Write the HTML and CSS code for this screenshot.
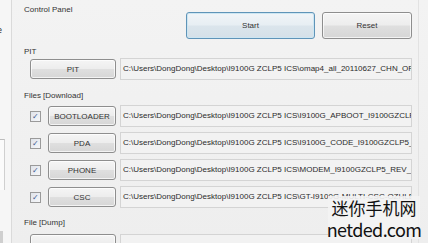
FILE: index.html
```html
<!DOCTYPE html>
<html lang="en">
<head>
  <meta charset="UTF-8" />
  <title>Odin3 - Control Panel</title>
  <link rel="stylesheet" href="styles.css">
</head>
<body>

  <div class="window">
    <!-- Left strip (previous panel, cut off) -->
    <div class="side">
      <span class="side-label">e</span>
      <div class="side-box"></div>
      <div class="side-bottom"></div>
    </div>

    <!-- Main panel -->
    <div class="panel">

      <!-- Control Panel -->
      <section class="control">
        <div class="group-title">Control Panel</div>
        <div class="control-buttons">
          <button class="btn btn-start">Start</button>
          <button class="btn btn-reset">Reset</button>
        </div>
      </section>

      <!-- PIT -->
      <div class="group-title pit-title">PIT</div>
      <div class="file-row no-check">
        <button class="btn btn-file btn-pit">PIT</button>
        <div class="path">C:\Users\DongDong\Desktop\I9100G ZCLP5 ICS\omap4_all_20110627_CHN_OFFICIAL.pit</div>
      </div>

      <!-- Files [Download] -->
      <div class="group-title files-title">Files [Download]</div>
      <div class="file-list">
        <div class="file-row">
          <span class="check">&#10003;</span>
          <button class="btn btn-file">BOOTLOADER</button>
          <div class="path">C:\Users\DongDong\Desktop\I9100G ZCLP5 ICS\I9100G_APBOOT_I9100GZCLP5_CL1069718_REV_00_user_low_ship.tar.md5</div>
        </div>
        <div class="file-row">
          <span class="check">&#10003;</span>
          <button class="btn btn-file">PDA</button>
          <div class="path">C:\Users\DongDong\Desktop\I9100G ZCLP5 ICS\I9100G_CODE_I9100GZCLP5_CL1069718_REV_00_user_low_ship.tar.md5</div>
        </div>
        <div class="file-row">
          <span class="check">&#10003;</span>
          <button class="btn btn-file">PHONE</button>
          <div class="path">C:\Users\DongDong\Desktop\I9100G ZCLP5 ICS\MODEM_I9100GZCLP5_REV_05_CL1069718.tar.md5</div>
        </div>
        <div class="file-row">
          <span class="check">&#10003;</span>
          <button class="btn btn-file">CSC</button>
          <div class="path">C:\Users\DongDong\Desktop\I9100G ZCLP5 ICS\GT-I9100G-MULTI-CSC-OZHLB.tar.md5</div>
        </div>
      </div>

      <!-- File [Dump] -->
      <div class="group-title dump-title">File [Dump]</div>
      <div class="file-row no-check">
        <button class="btn btn-file btn-pit"></button>
        <div class="path"></div>
      </div>

    </div>

    <div class="edge"></div>

    <!-- Site watermark -->
    <div class="watermark">
      <span class="wm-cn">迷你手机网</span>
      <span class="wm-en">netded.com</span>
    </div>
  </div>

</body>
</html>
```

FILE: styles.css
```css
/* === Page === */
body {
  margin: 0;
  background: #f0f0f0;
  font-family: 'Liberation Sans', Arial, sans-serif;
  font-size: 8px;
  color: #2b2b2b;
}

.window {
  position: relative;
  display: flex;
  width: 428px;
  height: 243px;
  overflow: hidden;
  background: linear-gradient(180deg, #f3f3f3, #eeeeee);
}

/* === Left strip === */
.side {
  width: 11px;
  flex-shrink: 0;
  border-right: 1px solid #dadada;
  background: #f6f6f6;
  display: flex;
  flex-direction: column;
}

.side-label {
  margin-top: 25px;
  margin-left: -3px;
  font-size: 9px;
  line-height: 10px;
}

.side-box {
  margin-top: 104px;
  width: 4px;
  height: 80px;
  border-top: 1px solid #bdbdbd;
  border-right: 1px solid #d0d0d0;
  background: #fbfbfb;
}

.side-bottom {
  margin-top: 41px;
  width: 3px;
  height: 20px;
  background: #cfcfcf;
}

/* === Main panel === */
.panel {
  width: 388px;
  flex-shrink: 0;
  padding: 0 0 0 12px;
  display: flex;
  flex-direction: column;
}

.edge {
  width: 1px;
  margin-left: 6px;
  background: #e2e2e2;
}

.group-title {
  line-height: 10px;
  height: 10px;
  color: #333;
}

/* === Control Panel === */
.control {
  display: flex;
  padding-top: 5px;
}

.control-buttons {
  display: flex;
  gap: 7px;
  margin-left: auto;
  margin-top: 7px;
}

.btn {
  font-family: 'Liberation Sans', Arial, sans-serif;
  font-size: 8px;
  color: #333;
  border: 1px solid #8e8e8e;
  border-radius: 3px;
  background: linear-gradient(180deg, #f5f5f5 0%, #ededed 48%, #dfdfdf 52%, #d6d6d6 100%);
  box-shadow: inset 0 0 0 1px rgba(255, 255, 255, 0.7);
  padding: 0;
}

.btn-start {
  width: 129px;
  height: 27px;
  border-color: #5f94b8;
  background: linear-gradient(180deg, #f1f5f8 0%, #e7eef3 48%, #dbe5ec 52%, #d5e0e8 100%);
  box-shadow: inset 0 0 0 1px #cde6f2;
}

.btn-reset {
  width: 90px;
  height: 27px;
}

/* === File rows === */
.pit-title {
  margin-top: 8px;
}

.files-title {
  margin-top: 11px;
}

.dump-title {
  margin-top: 9px;
}

.file-list {
  display: flex;
  flex-direction: column;
  gap: 3px;
  margin-top: 3px;
}

.file-row {
  display: flex;
  align-items: center;
  height: 24px;
  padding-left: 6px;
}

.pit-title + .file-row {
  margin-top: 1px;
}

.dump-title + .file-row {
  margin-top: 6px;
  align-items: flex-start;
}

.check {
  width: 9px;
  height: 9px;
  border: 1px solid #9a9a9a;
  background: linear-gradient(135deg, #dfe3ea, #f6f7f9);
  color: #3f5a93;
  font-size: 8px;
  line-height: 9px;
  text-align: center;
  margin-right: 7px;
  flex-shrink: 0;
}

.btn-file {
  width: 68px;
  height: 20px;
  flex-shrink: 0;
}

.btn-pit {
  width: 86px;
}

.path {
  margin-left: 4px;
  flex: 1;
  height: 22px;
  box-sizing: border-box;
  border: 1px solid #d4d4d4;
  background: #f2f2f2;
  padding: 0 0 0 2px;
  line-height: 20px;
  white-space: nowrap;
  overflow: hidden;
  color: #2b2b2b;
}

/* === Watermark === */
.watermark {
  position: absolute;
  left: 328px;
  top: 196px;
  width: 92px;
  display: flex;
  flex-direction: column;
  align-items: center;
  background: rgba(243, 243, 243, 0.9);
  color: #111;
}

.wm-cn {
  font-family: 'Noto Sans CJK SC', sans-serif;
  font-size: 17px;
  line-height: 23px;
}

.wm-en {
  font-family: 'Noto Sans CJK SC', 'Liberation Sans', sans-serif;
  font-size: 18px;
  line-height: 20px;
  letter-spacing: -0.6px;
}
```
